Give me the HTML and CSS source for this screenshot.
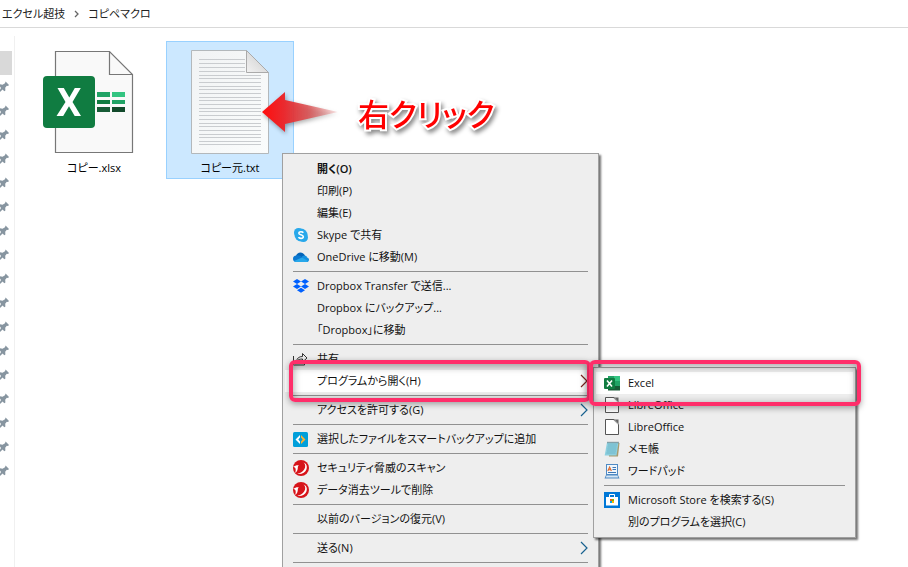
FILE: index.html
```html
<!DOCTYPE html>
<html lang="ja">
<head>
<meta charset="utf-8">
<title>コピペマクロ</title>
<link rel="stylesheet" href="styles.css">
</head>
<body>
<svg class="defs" aria-hidden="true">
  <symbol id="pin" viewBox="0 0 12 12"><path d="M5.6 0.5 9 4 8 5 6.8 4.8 5.2 6.8 5.4 9.5 4.3 10.3 2.6 8.4 0 11V8.8L1 7 0 5.600V3.200L2.500 3.800 5 2.200z" fill="#8795a0"/></symbol>
  <symbol id="doc" viewBox="0 0 16 16"><path d="M1.500.5H10l4.500 5v10h-13z" fill="#fff" stroke="#555"/><path d="M9 .5h5.500V6z" fill="#666"/><path d="M10.500 1l3.500 4" stroke="#ddd" stroke-width=".7"/></symbol>
  <symbol id="chev" viewBox="0 0 8 14"><path d="M1 1l6 6-6 6" fill="none" stroke="currentColor" stroke-width="1.200"/></symbol>
  <symbol id="trend" viewBox="0 0 16 16"><circle cx="8" cy="8" r="8" fill="#d7141a"/><path d="M10.500 2.500c2 1.500 2.300 4.300.8 6.800-1.500 2.400-4 4-7 4.500 4.200.8 8-1.300 9.200-4.600 1-2.900-.2-5.800-3-6.700z" fill="#fff"/><path d="M.3 6.800C2 5.700 4.300 5 5.800 5.500c-.8.500-1 1.300-1 2.500 0 1.800-.8 3.600-2.600 5C2.800 11 2.900 9.200 2.300 8 1.800 7.300 1 7 .3 6.800z" fill="#fff"/></symbol>
</svg>

<nav class="crumbs" aria-label="パス">
  <a href="#">エクセル超技</a>
  <svg class="crumb-sep" viewBox="0 0 5 8"><path d="M1 1l3 3-3 3" fill="none" stroke="#666" stroke-width="1.300"/></svg>
  <a href="#">コピペマクロ</a>
</nav>

<div class="explorer">
  <aside class="tree">
    <div class="tree-row selected"></div>
    <div class="tree-row"><svg><use href="#pin"/></svg></div>
    <div class="tree-row"><svg><use href="#pin"/></svg></div>
    <div class="tree-row"><svg><use href="#pin"/></svg></div>
    <div class="tree-row"><svg><use href="#pin"/></svg></div>
    <div class="tree-row"><svg><use href="#pin"/></svg></div>
    <div class="tree-row"><svg><use href="#pin"/></svg></div>
    <div class="tree-row"><svg><use href="#pin"/></svg></div>
    <div class="tree-row"><svg><use href="#pin"/></svg></div>
    <div class="tree-row"><svg><use href="#pin"/></svg></div>
    <div class="tree-row"><svg><use href="#pin"/></svg></div>
    <div class="tree-row"><svg><use href="#pin"/></svg></div>
    <div class="tree-row"><svg><use href="#pin"/></svg></div>
    <div class="tree-row"><svg><use href="#pin"/></svg></div>
    <div class="tree-row"><svg><use href="#pin"/></svg></div>
    <div class="tree-row"><svg><use href="#pin"/></svg></div>
    <div class="tree-row"><svg><use href="#pin"/></svg></div>
    <div class="tree-row"><svg><use href="#pin"/></svg></div>
  </aside>
  <main class="files">
    <div class="file">
      <svg class="file-icon" viewBox="12 0 104 104">
        <path d="M25.500 1.500h54l23 23v78h-77z" fill="#f9f9f9" stroke="#777" stroke-width="1.200"/>
        <path d="M79.500 1.500v23h23" fill="none" stroke="#777" stroke-width="1.200"/>
        <path d="M67 42h13v5H67z" fill="#21a366"/><path d="M82 42h13v5H82z" fill="#33c481"/>
        <path d="M67 50h13v4H67z" fill="#107c41"/><path d="M82 50h13v4H82z" fill="#21a366"/>
        <path d="M67 57h13v5H67z" fill="#185c37"/><path d="M82 57h13v5H82z" fill="#134a2c"/>
        <rect x="13" y="26" width="52" height="52" rx="4" fill="#107c41"/>
        <path d="M27.500 38h6.300l5.500 9.500L44.800 38h6L42.500 52 51 66h-6.300l-5.700-9.800L33.200 66H26.500l9-14z" fill="#fff"/>
      </svg>
      <span class="file-name">コピー.xlsx</span>
    </div>
    <div class="file selected">
      <svg class="file-icon" viewBox="0 0 104 104">
        <defs>
          <linearGradient id="paper" x1="0" y1="0" x2="1" y2="1"><stop offset="0" stop-color="#f1f3f4"/><stop offset="1" stop-color="#fafcfc"/></linearGradient>
          <linearGradient id="fold" x1="0" y1="1" x2="1" y2="0"><stop offset="0" stop-color="#f2f2f2"/><stop offset="1" stop-color="#c8c8c8"/></linearGradient>
        </defs>
        <path d="M13.500.5h55l22 22v81h-77z" fill="url(#paper)" stroke="#b3b8bb"/>
        <path d="M21 9.500h46M21 13.500h46M21 17.500h46M21 21.500h46M21 25.500h62M21 28.500h62M21 32.500h62M21 36.500h62M21 39.500h62M21 43.500h62M21 47.500h62M21 50.500h62M21 54.500h62M21 58.500h62M21 61.500h62M21 65.500h62M21 69.500h62M21 73.500h62M21 76.500h62M21 80.500h62M21 84.500h62M21 87.500h62M21 91.500h62M21 94.500h62" stroke="#c9cccf"/>
        <path d="M68.500.5v22h22z" fill="url(#fold)" stroke="#aaa"/>
      </svg>
      <span class="file-name">コピー元.txt</span>
    </div>
  </main>
</div>

<div class="callout">右クリック</div>
<svg class="arrow" viewBox="0 0 84 52">
  <defs><linearGradient id="red" x1="0" x2="1" y1="0" y2="0"><stop offset="0" stop-color="#ff0d0d"/><stop offset=".3" stop-color="#e92b30"/><stop offset=".6" stop-color="#dc4a4c" stop-opacity=".85"/><stop offset="1" stop-color="#e06060" stop-opacity=".15"/></linearGradient></defs>
  <path d="M2 26 25 6v8l53 12-53 12v8z" fill="url(#red)"/>
</svg>

<div class="menu main-menu" role="menu">
  <button class="item default" role="menuitem"><span class="ico"></span>開く(O)</button>
  <button class="item" role="menuitem"><span class="ico"></span>印刷(P)</button>
  <button class="item" role="menuitem"><span class="ico"></span>編集(E)</button>
  <button class="item" role="menuitem"><svg class="ico" viewBox="0 0 16 16"><circle cx="5.500" cy="5.500" r="4.500" fill="#28a8ea"/><circle cx="10.500" cy="10.500" r="4.500" fill="#28a8ea"/><circle cx="8" cy="8" r="6.500" fill="#28a8ea"/><path d="M10.300 5.700C9.600 4.600 6 4.200 5.800 6.100 5.700 8.200 10.400 7.300 10.300 9.700c-.1 2.200-4 2-4.800.5" fill="none" stroke="#fff" stroke-width="1.600"/></svg>Skype で共有</button>
  <button class="item" role="menuitem"><svg class="ico" viewBox="0 0 16 16"><path d="M3 7C4 3 9.500 2 12 6.500L9 12H3z" fill="#0364b8"/><path d="M9 7.500c2-2 5-1 5 1C17 9 16.500 13 13.500 13H8z" fill="#1490df"/><path d="M3.500 6.500C1 6.500 0 8 0 10c0 2 1.500 3 3.500 3l6-4.500C7.500 6.500 5 6 3.500 6.500z" fill="#0a78d1"/><path d="M1 12l8-3.500 6 3.500c-.5.700-1 1-2 1H3.500C2.500 13 1.500 12.600 1 12z" fill="#28a8ea"/></svg>OneDrive に移動(M)</button>
  <hr>
  <button class="item" role="menuitem"><svg class="ico" viewBox="0 0 16 16"><path d="M4 1l4 2.500L4 6 0 3.500zM12 1l4 2.500L12 6 8 3.500zM4 6l4 2.500L4 11 0 8.500zM12 6l4 2.500-4 2.500-4-2.500zM8 9.800l4 2.500-4 2.500-4-2.500z" fill="#0061fe"/></svg>Dropbox Transfer で送信...</button>
  <button class="item" role="menuitem"><span class="ico"></span>Dropbox にバックアップ...</button>
  <button class="item" role="menuitem"><span class="ico"></span>「Dropbox」に移動</button>
  <hr>
  <button class="item" role="menuitem"><svg class="ico" viewBox="0 0 16 16"><path d="M.5 5v9h11v-3M3.500 10.500C4 7 6 5.500 9.500 5.500v-3L14 7l-4.500 4v-3C7 8 5 8.500 3.500 10.500z" fill="none" stroke="#333"/></svg>共有</button>
  <button class="item active" role="menuitem"><span class="ico"></span>プログラムから開く(H)<svg class="chev"><use href="#chev"/></svg></button>
  <hr>
  <button class="item" role="menuitem"><span class="ico"></span>アクセスを許可する(G)<svg class="chev"><use href="#chev"/></svg></button>
  <hr>
  <button class="item" role="menuitem"><svg class="ico" viewBox="0 0 16 16"><rect y="1" width="15" height="15" rx="1.500" fill="#009fda"/><path d="M7 4v2.500L5.300 8.500 7 10.500V13L2.500 8.500z" fill="#fff"/><path d="M8 4v2.500l1.700 2L8 10.500V13l4.500-4.500z" fill="#fcb131"/></svg>選択したファイルをスマートバックアップに追加</button>
  <hr>
  <button class="item" role="menuitem"><svg class="ico"><use href="#trend"/></svg>セキュリティ脅威のスキャン</button>
  <button class="item" role="menuitem"><svg class="ico"><use href="#trend"/></svg>データ消去ツールで削除</button>
  <hr>
  <button class="item" role="menuitem"><span class="ico"></span>以前のバージョンの復元(V)</button>
  <hr>
  <button class="item" role="menuitem"><span class="ico"></span>送る(N)<svg class="chev"><use href="#chev"/></svg></button>
  <hr>
</div>

<div class="menu sub-menu" role="menu">
  <button class="item active" role="menuitem"><svg class="ico" viewBox="0 0 16 16"><path d="M4 1h6v5H4z" fill="#21a366"/><path d="M10 1h6v5h-6z" fill="#33c481"/><path d="M4 6h6v5H4z" fill="#107c41"/><path d="M10 6h6v5h-6z" fill="#21a366"/><path d="M4 11h12v4.500H4z" fill="#185c37"/><rect y="3" width="11" height="11" rx="1" fill="#107c41"/><path d="M3 5.500l5 6M8 5.500l-5 6" stroke="#fff" stroke-width="1.600"/></svg>Excel</button>
  <button class="item" role="menuitem"><svg class="ico"><use href="#doc"/></svg>LibreOffice</button>
  <button class="item" role="menuitem"><svg class="ico"><use href="#doc"/></svg>LibreOffice</button>
  <button class="item" role="menuitem"><svg class="ico" viewBox="0 0 16 16"><path d="M4 2h11.500L14 15.500H5z" fill="#a89a6c"/><path d="M3 1.500h11.500l-2 13H.7z" fill="#8ccfdf"/><path d="M4 4h9M3.600 6h9M3.300 8h9M3 10h9M2.500 12h9" stroke="#66aebf" stroke-width=".7"/><path d="M3.500 1.500h11" stroke="#476069" stroke-width="1.500" stroke-dasharray="1 1"/></svg>メモ帳</button>
  <button class="item" role="menuitem"><svg class="ico" viewBox="0 0 16 16"><path d="M2 1h12v11l1.500 3.500H.5L2 12z" fill="#4f8ac4"/><path d="M3 2h10v9H3z" fill="#eef6fd"/><path d="M2.500 12.500h11l.7 2H1.800z" fill="#d5e6f4"/><path d="M3.800 8l1.800-4 1.800 4M4.500 6.700h2.400" fill="none" stroke="#e06b2b" stroke-width="1.100"/><path d="M8.500 4.500H12M8.500 6.500H12M4 9.500h8" stroke="#3c77b5"/></svg>ワードパッド</button>
  <hr>
  <button class="item" role="menuitem"><svg class="ico" viewBox="0 0 16 16"><path d="M0 0h16v16H0z" fill="#0078d7"/><path d="M5.500 5V2.500h5V5" fill="none" stroke="#fff"/><path d="M2 5h12v8.500H2z" fill="#fff"/><path d="M6 7h2v2H6z" fill="#f25022"/><path d="M8 7h2v2H8z" fill="#7fba00"/><path d="M6 9h2v2H6z" fill="#00a4ef"/><path d="M8 9h2v2H8z" fill="#ffb900"/></svg>Microsoft Store を検索する(S)</button>
  <button class="item" role="menuitem"><span class="ico"></span>別のプログラムを選択(C)</button>
</div>

<div class="mark mark-main"></div>
<div class="mark mark-sub"></div>
</body>
</html>
```
FILE: styles.css
```css
* {
  box-sizing: border-box;
}

body {
  margin: 0;
  height: 100vh;
  position: relative;
  overflow: hidden;
  display: flex;
  flex-direction: column;
  background: #fff;
  color: #000;
  font-family: "Open Sans", "Noto Sans CJK JP", sans-serif;
  font-size: 11px;
  line-height: 16px;
  font-feature-settings: "palt";
}

.defs {
  position: absolute;
  width: 0;
  height: 0;
}

.crumbs {
  display: flex;
  align-items: center;
  gap: 9px;
  height: 28px;
  padding: 0 2px;
  border-bottom: 1px solid #d9d9d9;
}

.crumbs a {
  color: #222;
  text-decoration: none;
}

.crumb-sep {
  width: 5px;
  height: 8px;
}

.explorer {
  flex: 1;
  display: flex;
  padding-top: 8px;
}

.tree {
  width: 15px;
  padding: 15px 2px 0 0;
  border-right: 1px solid #f0f0f0;
}

.tree-row {
  display: flex;
  align-items: center;
  height: 24px;
}

.tree-row svg {
  width: 12px;
  height: 12px;
}

.tree-row.selected {
  background: #d9d9d9;
}

.files {
  flex: 1;
  display: flex;
  align-items: flex-start;
  gap: 8px;
  padding: 5px 15px;
}

.file {
  width: 128px;
  display: flex;
  flex-direction: column;
  align-items: center;
  gap: 8px;
  padding: 8px 0 4px;
  border: 1px solid transparent;
}

.file.selected {
  background: #cce8ff;
  border-color: #99d1ff;
}

.file-icon {
  width: 104px;
  height: 104px;
}

.file-name {
  line-height: 12px;
}

.callout {
  position: absolute;
  left: 358px;
  top: 92px;
  color: #f00;
  font-size: 31px;
  line-height: 44px;
  font-weight: 500;
  white-space: nowrap;
  -webkit-text-stroke: 4px #fff;
  paint-order: stroke fill;
  filter: drop-shadow(2px 3px 2px rgba(0, 0, 0, 0.45));
}

.arrow {
  position: absolute;
  left: 260px;
  top: 86px;
  width: 84px;
  height: 52px;
  filter: drop-shadow(1px 2px 2px rgba(0, 0, 0, 0.35));
}

.menu {
  position: absolute;
  display: flex;
  flex-direction: column;
  padding: 4px 2px;
  background: #eee;
  border: 1px solid #a0a0a0;
  box-shadow: 2px 2px 2px rgba(0, 0, 0, 0.55);
}

.main-menu {
  left: 282px;
  top: 153px;
  width: 317px;
}

.sub-menu {
  left: 593px;
  top: 367px;
  width: 263px;
}

.menu hr {
  width: auto;
  height: 1px;
  margin: 3px 8px;
  border: 0;
  background: #919191;
}

.item {
  display: flex;
  align-items: center;
  gap: 8px;
  height: 22px;
  padding: 0 8px;
  border: 0;
  background: none;
  color: #111;
  font: inherit;
  font-feature-settings: inherit;
  text-align: left;
  white-space: nowrap;
}

.item.default {
  font-weight: 600;
}

.item.active {
  background: #fff;
}

.ico {
  width: 16px;
  height: 16px;
  flex: none;
}

.chev {
  width: 8px;
  height: 14px;
  margin-left: auto;
  color: #17618f;
}

.active .chev {
  color: #7d2620;
}

.mark {
  position: absolute;
  border: 4px solid #ff2e6a;
  border-radius: 6px;
  box-shadow: 0 2px 6px rgba(0, 0, 0, 0.35), inset 0 2px 8px rgba(0, 0, 0, 0.4);
  pointer-events: none;
}

.mark-main {
  left: 289px;
  top: 360px;
  width: 302px;
  height: 42px;
}

.mark-sub {
  left: 589px;
  top: 360px;
  width: 272px;
  height: 46px;
}
```
